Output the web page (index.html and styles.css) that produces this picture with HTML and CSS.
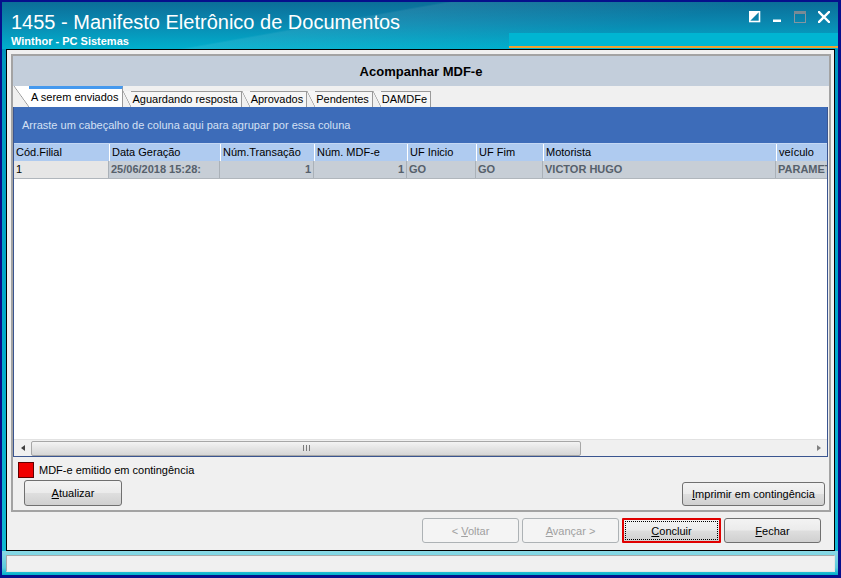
FILE: index.html
```html
<!DOCTYPE html>
<html lang="pt-BR">
<head>
    <meta charset="UTF-8">
    <title>1455 - Manifesto Eletrônico de Documentos</title>
    <link rel="stylesheet" href="styles.css">
</head>
<body>
    <div class="window">
        <div class="titlebar">
            <div class="title-text">
                <div class="title">1455 - Manifesto Eletrônico de Documentos</div>
                <div class="subtitle">Winthor - PC Sistemas</div>
            </div>
            <div class="controls">
                <svg class="ctl" width="12" height="12" viewBox="0 0 12 12">
                    <rect x="0.5" y="0.5" width="10" height="10" fill="none" stroke="#fff" stroke-width="1.6"/>
                    <polygon points="0,0 11,0 0,11" fill="#fff"/>
                </svg>
                <svg class="ctl" width="9" height="12" viewBox="0 0 9 12">
                    <rect x="0" y="8.5" width="8" height="2.5" fill="#fff"/>
                </svg>
                <svg class="ctl" width="12" height="12" viewBox="0 0 12 12">
                    <rect x="0.5" y="0.5" width="11" height="11" fill="none" stroke="#8595a0" stroke-width="1"/>
                    <rect x="0" y="0" width="12" height="3" fill="#7a8a94"/>
                </svg>
                <svg class="ctl" width="12" height="12" viewBox="0 0 12 12">
                    <path d="M1 1 L11 11 M11 1 L1 11" stroke="#fff" stroke-width="2.4" stroke-linecap="square"/>
                </svg>
            </div>
        </div>

        <div class="client">
            <div class="panel">
                <div class="panel-header">Acompanhar MDF-e</div>

                <div class="tabs">
                    <div class="tab active"><span class="slant"></span><span class="tab-label">A serem enviados</span></div>
                    <div class="tab"><span class="slant"></span><span class="tab-label">Aguardando resposta</span></div>
                    <div class="tab"><span class="slant"></span><span class="tab-label">Aprovados</span></div>
                    <div class="tab"><span class="slant"></span><span class="tab-label">Pendentes</span></div>
                    <div class="tab"><span class="slant"></span><span class="tab-label">DAMDFe</span></div>
                </div>

                <div class="grid">
                    <div class="group-box">Arraste um cabeçalho de coluna aqui para agrupar por essa coluna</div>
                    <div class="grid-head">
                        <div class="cell c-filial">Cód.Filial</div>
                        <div class="cell c-data">Data Geração</div>
                        <div class="cell c-trans">Núm.Transação</div>
                        <div class="cell c-mdfe">Núm. MDF-e</div>
                        <div class="cell c-ufi">UF Inicio</div>
                        <div class="cell c-uff">UF Fim</div>
                        <div class="cell c-mot">Motorista</div>
                        <div class="cell c-vei">veículo</div>
                    </div>
                    <div class="grid-row">
                        <div class="cell c-filial first">1</div>
                        <div class="cell c-data">25/06/2018 15:28:</div>
                        <div class="cell c-trans num">1</div>
                        <div class="cell c-mdfe num">1</div>
                        <div class="cell c-ufi">GO</div>
                        <div class="cell c-uff">GO</div>
                        <div class="cell c-mot">VICTOR HUGO</div>
                        <div class="cell c-vei">PARAMET</div>
                    </div>
                    <div class="grid-body"></div>
                    <div class="hscroll">
                        <span class="arrow left"></span>
                        <div class="track">
                            <div class="thumb"><span class="grip"></span><span class="grip"></span><span class="grip"></span></div>
                        </div>
                        <span class="arrow right"></span>
                    </div>
                </div>

                <div class="legend">
                    <span class="swatch"></span>
                    <span>MDF-e emitido em contingência</span>
                </div>

                <div class="panel-actions">
                    <button class="btn btn-update"><u>A</u>tualizar</button>
                    <button class="btn btn-print"><u>I</u>mprimir em contingência</button>
                </div>
            </div>

            <div class="wizard-buttons">
                <button class="btn wiz" disabled>&lt; <u>V</u>oltar</button>
                <button class="btn wiz" disabled><u>A</u>vançar &gt;</button>
                <button class="btn wiz focused"><u>C</u>oncluir</button>
                <button class="btn wiz"><u>F</u>echar</button>
            </div>
        </div>

        <div class="statusbar">
            <div class="status-box"></div>
        </div>
    </div>
</body>
</html>
```

FILE: styles.css
```css
* {
    box-sizing: border-box;
}

body {
    margin: 0;
    font-family: "Liberation Sans", Arial, sans-serif;
    font-size: 11px;
    color: #000;
}

.window {
    width: 841px;
    height: 578px;
    border-style: solid;
    border-color: #06108c;
    border-width: 2px 3px 3px 2px;
    background: linear-gradient(180deg, #0b6f99 0%, #0098be 10%, #00aacb 60%, #14b9d3 100%);
    display: flex;
    flex-direction: column;
}

/* title bar */
.titlebar {
    height: 47px;
    display: flex;
    justify-content: space-between;
    padding: 8px 8px 0 9px;
    background:
        linear-gradient(#f0a030, #f0a030) 507px 44px / 329px 2px no-repeat,
        linear-gradient(#00b5d2, #00b5d2) 507px 31px / 329px 13px no-repeat,
        linear-gradient(170deg, rgba(255,255,255,0) 40%, rgba(255,255,255,0.08) 41%, rgba(255,255,255,0) 70%),
        linear-gradient(180deg, #0b6e98 0%, #0a88b0 45%, #00afcd 100%);
}

.title {
    color: #fff;
    font-size: 20px;
    line-height: 24px;
}

.subtitle {
    color: #fff;
    font-weight: bold;
    font-size: 11px;
    line-height: 13px;
    margin-top: 1px;
}

.controls {
    display: flex;
    align-items: flex-start;
    gap: 12px;
    padding-top: 1px;
}

.ctl {
    display: block;
}

/* client area */
.client {
    height: 502px;
    margin: 0 3px 0 4px;
    border: 1px solid #000;
    background: #f0f0f0;
    padding: 4px 3px 0 4px;
    display: flex;
    flex-direction: column;
}

.panel {
    height: 458px;
    border: 2px solid #a3a3a3;
    display: flex;
    flex-direction: column;
}

.panel-header {
    height: 30px;
    background: #c3cedb;
    font-size: 13px;
    font-weight: bold;
    display: flex;
    align-items: center;
    justify-content: center;
    padding-top: 1px;
}

/* tabs */
.tabs {
    height: 21px;
    display: flex;
    align-items: flex-end;
    padding-left: 1px;
    background: #f0f0f0;
}

.tab {
    display: flex;
    height: 16px;
}

.tab .slant {
    width: 8px;
    background: linear-gradient(to top right, rgba(0,0,0,0) calc(50% - 0.7px), #9a9a9a 50%, #f6f6f6 calc(50% + 0.7px));
}

.tab-label {
    background: #f6f6f6;
    border-top: 1px solid #9a9a9a;
    border-right: 1px solid #9a9a9a;
    padding: 0 3px 0 1px;
    line-height: 15px;
    white-space: nowrap;
}

.tab.active {
    height: 21px;
}

.tab.active .slant {
    width: 15px;
    background: linear-gradient(to top right, rgba(0,0,0,0) calc(50% - 0.7px), #9a9a9a 50%, #fff calc(50% + 0.7px));
}

.tab.active .tab-label {
    background: #fff;
    border-top: 3px solid #4599ee;
    padding: 0 4px 0 2px;
    line-height: 17px;
}

/* grid */
.grid {
    height: 350px;
    margin-right: 1px;
    border: 1px solid #3a5590;
    border-top: none;
    display: flex;
    flex-direction: column;
    background: #fff;
}

.group-box {
    height: 36px;
    background: #3d6cb9;
    color: #d4e0f4;
    padding-left: 8px;
    display: flex;
    align-items: center;
}

.grid-head,
.grid-row {
    display: flex;
    height: 18px;
    overflow: hidden;
    white-space: nowrap;
}

.grid-head {
    background: #afcbf0;
    border-top: 1px solid #c4d8f4;
}

.grid-head .cell {
    border-left: 1px solid #fff;
    padding-left: 2px;
    line-height: 17px;
}

.grid-head .cell.c-filial {
    border-left: none;
}

.grid-row {
    background: #c7ced6;
    border-bottom: 1px solid #b0b6bc;
    font-weight: bold;
    color: #56606b;
}

.grid-row .cell {
    border-right: 1px solid #aab1b8;
    padding: 0 2px;
    line-height: 17px;
    overflow: hidden;
}

.grid-row .cell.first {
    background: #e6e6e6;
    color: #000;
    font-weight: normal;
}

.grid-row .num {
    text-align: right;
}

.cell {
    flex: none;
}

.c-filial { width: 95px; }
.c-data { width: 111px; }
.c-trans { width: 94px; }
.c-mdfe { width: 93px; }
.c-ufi { width: 69px; }
.c-uff { width: 67px; }
.c-mot { width: 233px; }
.c-vei { width: 52px; }

.grid-body {
    flex: 1;
}

.hscroll {
    height: 17px;
    display: flex;
    align-items: center;
    background: #f0f0f0;
    border-top: 1px solid #e2e2e2;
}

.arrow {
    width: 17px;
    display: flex;
    justify-content: center;
}

.arrow.left::before {
    content: "";
    border-style: solid;
    border-width: 3px 4px 3px 0;
    border-color: transparent #404040 transparent transparent;
}

.arrow.right::before {
    content: "";
    border-style: solid;
    border-width: 3px 0 3px 4px;
    border-color: transparent transparent transparent #808080;
}

.track {
    flex: 1;
    height: 15px;
}

.thumb {
    width: 550px;
    height: 15px;
    border: 1px solid #a7a7a7;
    border-radius: 2px;
    background: linear-gradient(#f4f4f4, #e4e4e4 50%, #d6d6d6);
    display: flex;
    justify-content: center;
    align-items: center;
    gap: 2px;
}

.grip {
    width: 1px;
    height: 6px;
    background: #7a7a7a;
}

/* legend + panel actions */
.legend {
    display: flex;
    align-items: center;
    gap: 5px;
    padding: 4px 0 0 5px;
    height: 21px;
}

.swatch {
    width: 16px;
    height: 16px;
    background: #f00000;
    border: 1px solid #600000;
}

.panel-actions {
    display: flex;
    justify-content: space-between;
    align-items: flex-end;
    padding: 2px 4px 0 11px;
}

.btn {
    font-family: "Liberation Sans", Arial, sans-serif;
    font-size: 11px;
    color: #000;
    border: 1px solid #707070;
    border-radius: 3px;
    background: linear-gradient(#f3f3f3 0%, #ebebeb 48%, #dedede 52%, #d0d0d0 100%);
    padding: 0;
    cursor: pointer;
}

.btn-update {
    width: 98px;
    height: 26px;
}

.btn-print {
    width: 143px;
    height: 24px;
}

/* wizard buttons */
.wizard-buttons {
    display: flex;
    justify-content: flex-end;
    gap: 3px;
    padding-right: 10px;
    margin-top: 6px;
}

.wiz {
    width: 97px;
    height: 25px;
}

.wiz:disabled {
    color: #a0a0a0;
    border-color: #adb2b5;
    background: #f4f4f4;
    cursor: default;
}

.wiz.focused {
    width: 99px;
    border: 2px solid #e00000;
    border-radius: 1px;
    outline: 1px dotted #000;
    outline-offset: -4px;
}

/* status bar */
.statusbar {
    flex: 1;
    padding: 4px 3px 3px 4px;
    background: linear-gradient(#8ad9e5, #5ccbdc 70%, #00b2cb);
}

.status-box {
    height: 17px;
    background: #f0f0f0;
    border: 1px solid #a9a9a9;
    border-right-color: #e6e6e6;
    border-bottom-color: #e6e6e6;
}
```
